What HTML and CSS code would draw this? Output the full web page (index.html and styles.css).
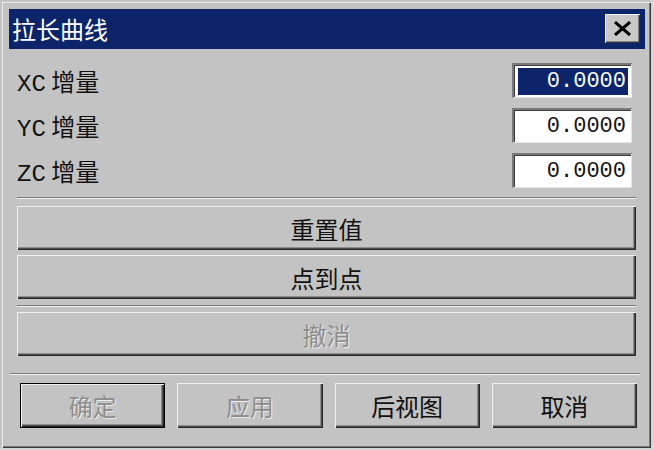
FILE: index.html
```html
<!DOCTYPE html>
<html lang="zh">
<head>
    <meta charset="UTF-8">
    <meta name="viewport" content="width=device-width, initial-scale=1.0">
    <title>拉长曲线</title>
    <link rel="stylesheet" href="styles.css">
</head>
<body>
    <div class="window">
        <div class="titlebar">
            <span class="title">拉长曲线</span>
            <button type="button" class="close">
                <svg width="19" height="15" viewBox="0 0 19 15">
                    <path d="M2 1 L17 14 M17 1 L2 14" stroke="#000" stroke-width="3" fill="none"/>
                </svg>
            </button>
        </div>

        <div class="content">
            <div class="fields">
                <div class="field">
                    <span class="label"><span class="axis">XC</span> 增量</span>
                    <div class="input sel"><span>0.0000</span></div>
                </div>
                <div class="field">
                    <span class="label"><span class="axis">YC</span> 增量</span>
                    <div class="input"><span>0.0000</span></div>
                </div>
                <div class="field">
                    <span class="label"><span class="axis">ZC</span> 增量</span>
                    <div class="input"><span>0.0000</span></div>
                </div>
            </div>

            <hr class="sep sep-top">
            <button type="button" class="btn wide">重置值</button>
            <button type="button" class="btn wide">点到点</button>
            <hr class="sep sep-mid">
            <button type="button" class="btn wide disabled">撤消</button>
        </div>

        <hr class="sep sep-bottom">
        <div class="actions">
            <button type="button" class="btn default disabled">确定</button>
            <button type="button" class="btn disabled">应用</button>
            <button type="button" class="btn">后视图</button>
            <button type="button" class="btn">取消</button>
        </div>
    </div>
</body>
</html>
```

FILE: styles.css
```css
body {
    margin: 0;
    background: #d6d6d6;
    font-family: "Noto Sans CJK SC", sans-serif;
}

.window {
    box-sizing: border-box;
    width: 651px;
    height: 448px;
    padding: 9px 6px 0 9px;
    background: #c3c3c3;
    box-shadow: inset 2px 2px 0 #c3c3c3, inset 3px 3px 0 #ececec,
        inset -1px -1px 0 #3a3a3a, inset -2px -2px 0 #7a7a7a;
}

/* title bar */
.titlebar {
    display: flex;
    align-items: center;
    justify-content: space-between;
    height: 40px;
    padding: 0 5px 0 3px;
    background: #0c246a;
    color: #fff;
}

.title {
    font-size: 24px;
    line-height: 1;
}

.close {
    display: flex;
    align-items: center;
    justify-content: center;
    width: 35px;
    height: 29px;
    margin-top: -2px;
    padding: 0;
    border: none;
    background: #c8c8c8;
    box-shadow: inset 1px 1px 0 #f4f4f4, inset -1px -1px 0 #303030, inset -2px -2px 0 #808080;
}

/* fields */
.content {
    padding: 0 9px 0 8px;
}

.fields {
    display: grid;
    row-gap: 10px;
    margin-top: 14px;
    padding-right: 4px;
}

.field {
    display: flex;
    align-items: center;
    justify-content: space-between;
    height: 35px;
}

.label {
    font-size: 24px;
    color: #111;
}

.axis {
    font-family: "Liberation Mono", monospace;
}

.input {
    box-sizing: border-box;
    display: flex;
    justify-content: flex-end;
    align-items: center;
    width: 120px;
    height: 35px;
    padding: 3px 3px 2px 4px;
    background: #fff;
    border-top: 2px solid #7a7a7a;
    border-left: 2px solid #7a7a7a;
    border-bottom: 1px solid #e4e4e4;
    border-right: 1px solid #e4e4e4;
    box-shadow: inset 1px 1px 0 #3c3c3c;
    font-family: "Liberation Mono", monospace;
    font-size: 22px;
    color: #111;
}

.input span {
    padding-right: 2px;
}

.input.sel span {
    flex: 1;
    align-self: stretch;
    display: flex;
    align-items: center;
    justify-content: flex-end;
    background: #0c246a;
    color: #fff;
}

/* etched separators */
.sep {
    height: 0;
    margin: 0;
    border: none;
    border-top: 1px solid #7c7c7c;
    border-bottom: 1px solid #f2f2f2;
}

.sep-top {
    margin: 9px 0 7px;
}

.sep-mid {
    margin: 6px 0 5px;
}

.sep-bottom {
    margin: 17px 5px 8px 1px;
}

/* buttons */
.btn {
    box-sizing: border-box;
    height: 45px;
    padding: 0;
    border: none;
    background: #c3c3c3;
    box-shadow: inset 1px 1px 0 #f0f0f0, inset -1px -1px 0 #262626,
        inset -2px -2px 0 #4e4e4e, inset -3px -3px 0 #8c8c8c;
    font-family: "Noto Sans CJK SC", sans-serif;
    font-size: 24px;
    color: #111;
}

.wide {
    display: block;
    width: 100%;
    height: 44px;
}

.wide + .wide {
    margin-top: 5px;
}

.disabled {
    color: #8d8d8d;
    text-shadow: 1px 1px 0 #ececec;
}

.default {
    border: 1px solid #000;
}

.actions {
    display: grid;
    grid-template-columns: repeat(4, 1fr);
    column-gap: 12px;
    padding: 0 8px 0 11px;
}
```
